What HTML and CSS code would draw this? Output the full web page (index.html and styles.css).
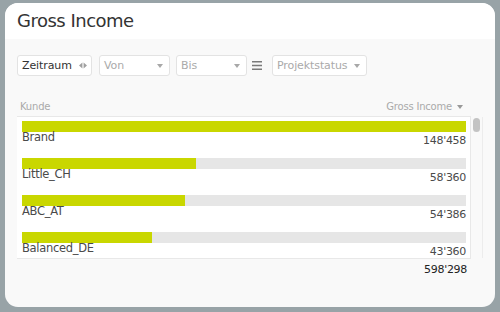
FILE: index.html
```html
<!DOCTYPE html>
<html lang="de">
<head>
<meta charset="utf-8">
<title>Gross Income</title>
<link rel="stylesheet" href="styles.css">
</head>
<body>
<div class="card">
  <div class="card-head"><h1 class="title">Gross Income</h1></div>
  <div class="card-body">
    <div class="filters">
      <div class="select sel-zeit">
        <span class="val">Zeitraum</span>
        <svg class="arrows" width="8" height="7" viewBox="0 0 8 7"><path d="M3.4 0.5 L0 3.5 L3.4 6.5 Z M4.6 0.5 L8 3.5 L4.6 6.5 Z" fill="#a0a0a0"/></svg>
      </div>
      <div class="select sel-von"><span class="ph">Von</span><span class="caret"></span></div>
      <div class="select sel-bis"><span class="ph">Bis</span><span class="caret"></span></div>
      <svg class="menu-icon" width="10" height="9" viewBox="0 0 10 9"><path d="M0 0.75 H10 M0 4.5 H10 M0 8.25 H10" stroke="#7a7a7a" stroke-width="1.5"/></svg>
      <div class="select sel-status"><span class="ph">Projektstatus</span><span class="caret"></span></div>
    </div>
    <div class="table">
      <div class="thead">
        <span>Kunde</span>
        <span class="sort">Gross Income <span class="caret small"></span></span>
      </div>
      <div class="tbody-wrap">
        <div class="rows">
          <div class="row">
            <div class="bar"><div class="fill" style="width:100%"></div></div>
            <div class="meta"><span class="label">Brand</span><span class="value">148'458</span></div>
          </div>
          <div class="row">
            <div class="bar"><div class="fill" style="width:39.3%"></div></div>
            <div class="meta"><span class="label">Little_CH</span><span class="value">58'360</span></div>
          </div>
          <div class="row">
            <div class="bar"><div class="fill" style="width:36.6%"></div></div>
            <div class="meta"><span class="label">ABC_AT</span><span class="value">54'386</span></div>
          </div>
          <div class="row">
            <div class="bar"><div class="fill" style="width:29.2%"></div></div>
            <div class="meta"><span class="label">Balanced_DE</span><span class="value">43'360</span></div>
          </div>
        </div>
        <div class="scrollbar"><div class="thumb"></div></div>
      </div>
      <div class="tfoot"><span class="total">598'298</span></div>
    </div>
  </div>
</div>
</body>
</html>
```
FILE: styles.css
```css
* { box-sizing: border-box; }
html, body { height: 100%; }
body {
  margin: 0;
  padding: 3px 5px 5px;
  background: #98a3a7;
  font-family: "DejaVu Sans", "Liberation Sans", sans-serif;
  color: #444;
}
.card {
  height: 304px;
  background: #f9f9f9;
  border-radius: 13px;
  overflow: hidden;
  display: flex;
  flex-direction: column;
}
.card-head {
  background: #fff;
  padding: 8px 12px;
}
.title {
  margin: 0;
  font-size: 18px;
  line-height: 20px;
  font-weight: normal;
  color: #333;
  letter-spacing: -0.5px;
}
.card-body {
  flex: 1;
  padding: 16px 12px 0;
}
.filters {
  display: flex;
  align-items: center;
  height: 21px;
}
.select {
  height: 21px;
  background: #fff;
  border: 1px solid #e3e3e3;
  border-radius: 3px;
  display: flex;
  align-items: center;
  justify-content: space-between;
  padding: 0 4px 0 4px;
  font-size: 11px;
  letter-spacing: -0.1px;
}
.val { color: #333; }
.ph { color: #aaa; }
.sel-zeit { width: 75px; }
.sel-zeit .arrows { margin-right: 0; }
.sel-von { width: 71px; margin-left: 7px; }
.sel-bis { width: 71px; margin-left: 6px; }
.menu-icon { margin-left: 5px; margin-right: 10px; }
.sel-status { width: 95px; }
.caret {
  width: 0;
  height: 0;
  border-left: 3px solid transparent;
  border-right: 3px solid transparent;
  border-top: 4px solid #a8a8a8;
  margin-right: 2px;
}
.caret.small {
  display: inline-block;
  border-top-color: #999;
  vertical-align: 1px;
  margin: 0 0 0 2px;
}
.table { margin-top: 17px; }
.thead {
  display: flex;
  justify-content: space-between;
  padding: 8px 8px 3px 3px;
  margin-right: 12px;
  border-bottom: 1px solid #e8e8e8;
  font-size: 10px;
  line-height: 12px;
  color: #aaa;
  letter-spacing: -0.2px;
}
.tbody-wrap {
  display: flex;
  height: 141px;
}
.rows {
  flex: 1;
  background: #fff;
  border-right: 1px solid #e8e8e8;
  overflow: hidden;
}
.row { padding: 4px 4px 8px 5px; }
.bar {
  height: 11px;
  background: #e6e6e6;
}
.fill {
  height: 100%;
  background: #c9d700;
}
.meta {
  display: flex;
  justify-content: space-between;
  align-items: flex-start;
  font-size: 11.5px;
  line-height: 11px;
  color: #4a4a4a;
}
.label { letter-spacing: -0.3px; }
.value { margin-top: 3px; font-size: 11px; letter-spacing: -0.3px; }
.scrollbar {
  width: 12px;
  border-right: 1px solid #ececec;
  padding: 1px 2px;
}
.thumb {
  width: 7px;
  height: 14px;
  background: #c3c3c3;
  border-radius: 4px;
}
.tfoot {
  margin-right: 12px;
  border-top: 1px solid #e8e8e8;
  padding: 5px 4px 0;
  text-align: right;
  font-size: 11px;
  line-height: 11px;
  color: #222;
  letter-spacing: -0.3px;
}
```
